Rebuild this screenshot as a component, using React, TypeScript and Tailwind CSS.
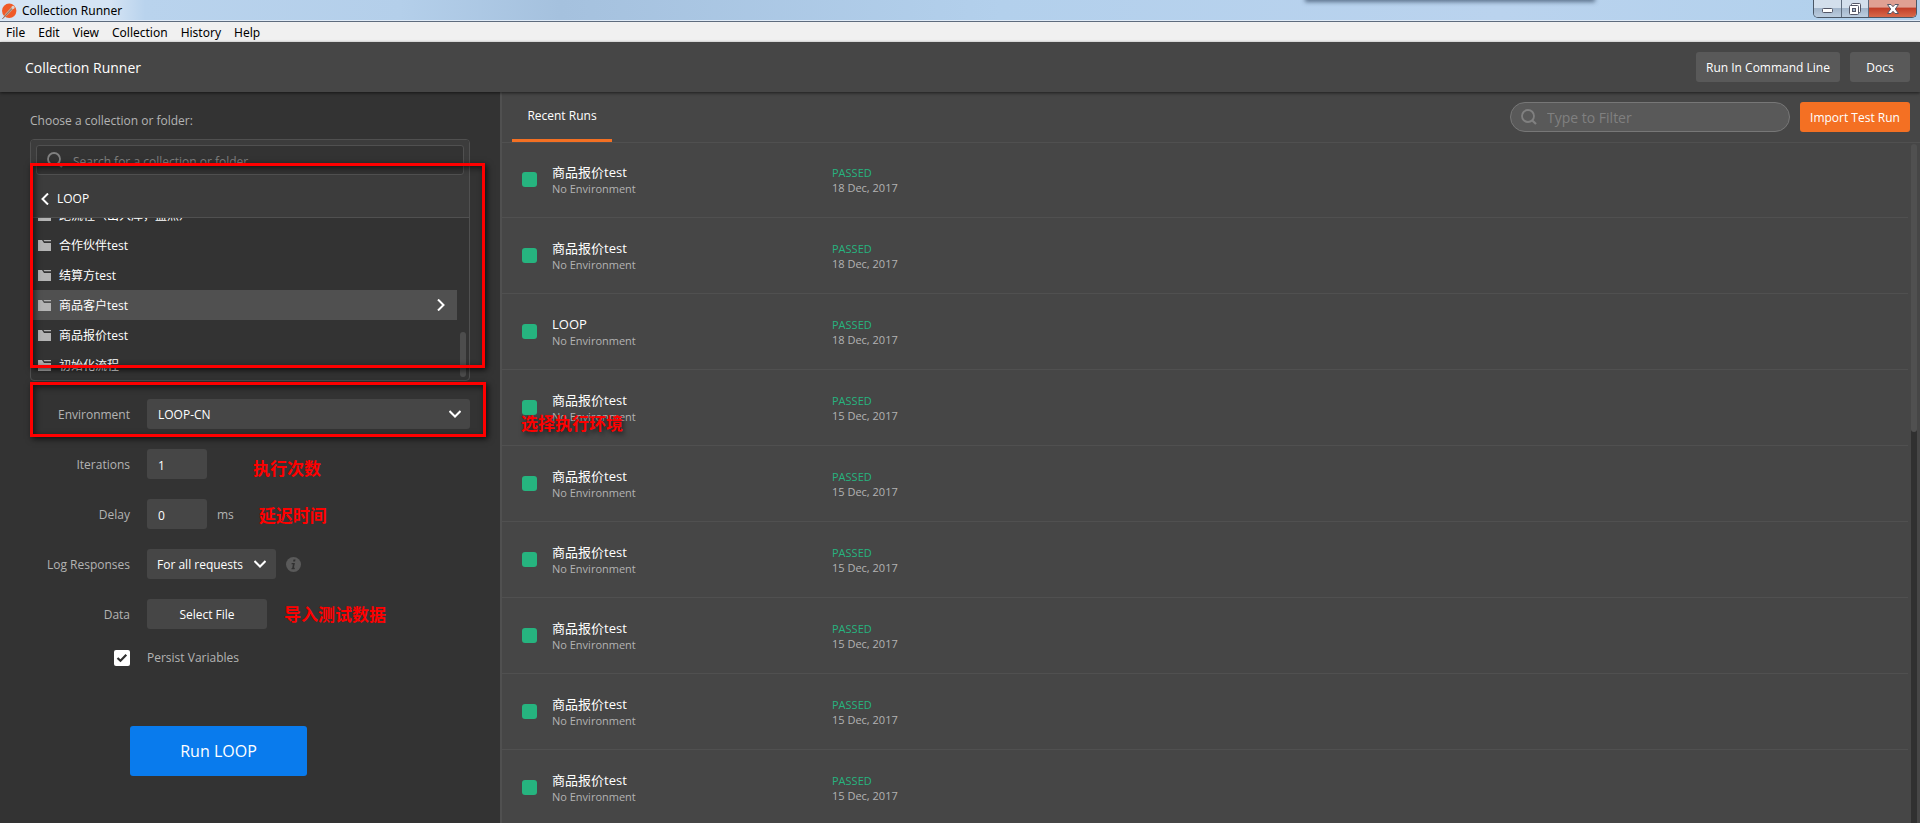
import React from "react";

const cjk = "[font-family:'Open_Sans','Noto_Sans_CJK_SC',sans-serif]";
const chrome = "[font-family:'Noto_Sans','Noto_Sans_CJK_SC',sans-serif]";

const folders = ["跑流程（出入库，盘点）", "合作伙伴test", "结算方test", "商品客户test", "商品报价test", "初始化流程"];

const runs = [
  { name: "商品报价test", date: "18 Dec, 2017" },
  { name: "商品报价test", date: "18 Dec, 2017" },
  { name: "LOOP", date: "18 Dec, 2017" },
  { name: "商品报价test", date: "15 Dec, 2017", note: "选择执行环境" },
  { name: "商品报价test", date: "15 Dec, 2017" },
  { name: "商品报价test", date: "15 Dec, 2017" },
  { name: "商品报价test", date: "15 Dec, 2017" },
  { name: "商品报价test", date: "15 Dec, 2017" },
  { name: "商品报价test", date: "15 Dec, 2017" },
];

function SearchIcon({ className }: { className: string }) {
  return (
    <svg viewBox="0 0 16 16" fill="none" stroke="currentColor" strokeWidth="1.8" className={className} aria-hidden="true">
      <circle cx="7" cy="7" r="6" />
      <path d="M11 11.2 15 15" strokeWidth="2.2" />
    </svg>
  );
}

function Chevron({ d, className }: { d: string; className: string }) {
  return (
    <svg viewBox="0 0 12 12" fill="none" stroke="currentColor" strokeWidth="2" className={className} aria-hidden="true">
      <path d={d} />
    </svg>
  );
}

function FolderIcon() {
  return (
    <svg viewBox="0 0 13 11" className="h-[11px] w-[13px] shrink-0 text-[#b4b4b4]" fill="currentColor" aria-hidden="true">
      <path d="M0 0h4l2 3h7v8H0z" />
      <path d="M5.5 0H13v1.2H6.3z" />
    </svg>
  );
}

function Note({ children, className }: { children: React.ReactNode; className: string }) {
  return (
    <span className={`whitespace-nowrap text-[17px] leading-5 font-bold text-[#ff0000] ${className}`}>{children}</span>
  );
}

function Frame({ className }: { className: string }) {
  return (
    <div
      className={`pointer-events-none absolute border-3 border-[#ff0000] shadow-[2px_2px_6px_rgba(0,0,0,0.7),inset_2px_2px_6px_rgba(0,0,0,0.6)] ${className}`}
    />
  );
}

function TitleBar() {
  return (
    <div className="relative flex h-[22px] shrink-0 items-start justify-between overflow-hidden border-b border-[#5d6b7d] bg-[linear-gradient(90deg,#d5e4f4_0,#d5e4f4_110px,#b9d3ed_145px,#b4cfea_400px,#a5c1de_560px,#b3d0ec_1000px,#bad3ee_1500px,#b0d0ec_100%)] shadow-[inset_0_-1px_0_#dfeaf6]">
      <div className="flex h-[22px] items-center gap-[5px] pl-px">
        <svg viewBox="0 0 16 16" className="size-4" aria-hidden="true">
          <circle cx="8.200" cy="7.800" r="7.200" fill="#f05a28" />
          <path d="M1 16.500 4.500 10.500 10 4.500l2.200 1.700L6.500 12z" fill="#c9a08c" />
          <path d="M.8 16.500 11.500 5" stroke="#7d6a62" strokeWidth=".8" />
          <circle cx="12" cy="4.400" r="1.600" fill="#d9d3cf" />
        </svg>
        <span className={`text-xs leading-5 text-black ${chrome}`}>Collection Runner</span>
      </div>
      <div className="absolute -top-1 left-[68%] h-1 w-[15%] shadow-[0_1px_4px_1px_rgba(50,70,95,0.7)]" />
      <div className="mr-[3px] flex h-[18px] overflow-hidden rounded-b-[5px] border border-t-0 border-[#4a5766]">
        <button aria-label="Minimize" className="flex w-7 items-center justify-center border-r border-[#5d6b7d] bg-[linear-gradient(#d3dfec_0_45%,#a3b6cb_50%,#bccddf)]">
          <svg viewBox="0 0 11 5" className="mt-1 h-[5px] w-[11px]" aria-hidden="true">
            <rect x=".5" y=".5" width="10" height="4" rx="1" fill="#fff" stroke="#535666" />
          </svg>
        </button>
        <button aria-label="Restore" className="flex w-[27px] items-center justify-center border-r border-[#5d6b7d] bg-[linear-gradient(#d3dfec_0_45%,#a3b6cb_50%,#bccddf)]">
          <svg viewBox="0 0 12 12" className="size-3" fill="#fff" stroke="#535666" aria-hidden="true">
            <rect x="2.500" y=".5" width="9" height="9" rx="1" />
            <rect x=".5" y="2.500" width="9" height="9" rx="1" />
            <rect x="3.500" y="5.500" width="3" height="3" fill="#a3b6cb" />
          </svg>
        </button>
        <button aria-label="Close" className="flex w-[47px] items-center justify-center bg-[linear-gradient(#e0a093_0_40%,#c2402a_50%,#d8694a)]">
          <svg viewBox="0 0 12 10" className="h-2.5 w-3" aria-hidden="true">
            <path d="M.5.5h3.500l2 2.200 2-2.200h3.500L8.300 5l3.200 4.500H8L6 7.300 4 9.500H.5L3.700 5z" fill="#fff" stroke="#535666" />
          </svg>
        </button>
      </div>
    </div>
  );
}

function CollectionPicker() {
  return (
    <div className="relative mt-2.5">
      <div className="flex h-[242px] flex-col overflow-hidden rounded-[4px] border border-[#505050]">
        <div className="border-b border-[#505050] bg-[#3c3c3c] px-[5px] pt-[5px]">
          <label className="flex h-[30px] items-center gap-2.5 rounded-[3px] border border-[#505050] bg-[#333333] px-2.5">
            <SearchIcon className="size-4 shrink-0 text-[#808080]" />
            <input
              aria-label="Search for a collection or folder"
              placeholder="Search for a collection or folder"
              className="w-full bg-transparent pt-1 text-xs text-white outline-none placeholder:text-[#808080]"
            />
          </label>
          <button className="flex h-[42px] items-center gap-1.5 pt-1.5 pl-[3px] text-xs text-white">
            <Chevron d="M9 0.500 3.500 6 9 11.500" className="size-3" />
            LOOP
          </button>
        </div>
        <div className="relative min-h-0 flex-1 overflow-hidden">
          <ul className="-mt-[18px] mr-3">
            {folders.map((name, i) => (
              <li key={name}>
                <button
                  className={`flex h-[30px] w-full items-center gap-2 pr-2.5 pl-[7px] text-left text-xs text-white ${i === 3 ? "bg-[#505050]" : ""}`}
                >
                  <FolderIcon />
                  <span className="flex-1 pt-0.5">{name}</span>
                  {i === 3 && <Chevron d="M3 0.500 8.500 6 3 11.500" className="size-3" />}
                </button>
              </li>
            ))}
          </ul>
          <div className="absolute right-[3px] bottom-[3px] h-[45px] w-1.5 rounded-full bg-[#4d4d4d]" />
        </div>
      </div>
      <Frame className="top-6 -right-[15px] bottom-[13px] left-0" />
    </div>
  );
}

const labelCls = "w-[100px] shrink-0 pt-0.5 text-right text-xs text-[#b3b3b3]";
const fieldCls = "h-[30px] rounded-[3px] bg-[#464646] pt-0.5 text-xs text-white outline-none";

function Settings() {
  return (
    <form className="flex flex-col" onSubmit={(e) => e.preventDefault()}>
      <div className="relative mt-px h-[55px] pt-[17px]">
        <div className="flex items-center gap-[17px]">
          <label htmlFor="env" className={labelCls}>Environment</label>
          <div className="relative flex-1">
            <select id="env" className={`${fieldCls} w-full appearance-none px-[11px]`}>
              <option>LOOP-CN</option>
            </select>
            <Chevron d="M0.500 3 6 8.500 11.500 3" className="pointer-events-none absolute top-[9px] right-[9px] size-3 text-white" />
          </div>
        </div>
        <Frame className="inset-y-0 -right-4 left-0" />
      </div>
      <div className="mt-3 flex items-center gap-[17px]">
        <label htmlFor="iter" className={labelCls}>Iterations</label>
        <input id="iter" defaultValue="1" className={`${fieldCls} w-[60px] px-[11px]`} />
        <Note className="mt-2.5 ml-[29px]">执行次数</Note>
      </div>
      <div className="mt-5 flex items-center gap-[17px]">
        <label htmlFor="delay" className={labelCls}>Delay</label>
        <div className="flex items-center gap-2.5">
          <input id="delay" defaultValue="0" className={`${fieldCls} w-[60px] px-[11px]`} />
          <span className="pt-0.5 text-xs text-[#b3b3b3]">ms</span>
        </div>
        <Note className="mt-1 ml-2">延迟时间</Note>
      </div>
      <div className="mt-5 flex items-center gap-[17px]">
        <label htmlFor="log" className={labelCls}>Log Responses</label>
        <div className="flex items-center gap-2.5">
          <div className="relative">
            <select id="log" className={`${fieldCls} w-[129px] appearance-none px-2.5`}>
              <option>For all requests</option>
            </select>
            <Chevron d="M0.500 3 6 8.500 11.500 3" className="pointer-events-none absolute top-[9px] right-2.5 size-3 text-white" />
          </div>
          <svg viewBox="0 0 15 15" className="size-[15px]" aria-hidden="true">
            <circle cx="7.500" cy="7.500" r="7.500" fill="#5a5a5a" />
            <path d="M7.500 2.500h2l-.4 2h-2zM5.700 6h3.200l-1 4.800h1l-.3 1.400H5.400l.3-1.300h.5l.7-3.600H5.500z" fill="#303030" />
          </svg>
        </div>
      </div>
      <div className="mt-5 flex items-center gap-[17px]">
        <label htmlFor="data" className={labelCls}>Data</label>
        <button id="data" type="button" className={`${fieldCls} w-[120px]`}>Select File</button>
        <Note className="mt-0.5">导入测试数据</Note>
      </div>
      <label className="mt-5 flex h-[18px] items-center gap-[17px] text-xs text-[#b3b3b3]">
        <span className="flex w-[100px] justify-end">
          <span className="relative size-4">
            <input type="checkbox" defaultChecked className="block size-4 appearance-none rounded-[2px] bg-white" />
            <svg viewBox="0 0 16 16" className="pointer-events-none absolute inset-0 size-4" aria-hidden="true">
              <path d="M3.500 8 6.500 10.800 12.300 4.800" fill="none" stroke="#303030" strokeWidth="2.200" />
            </svg>
          </span>
        </span>
        Persist Variables
      </label>
      <button className="mt-[59px] ml-[100px] h-[50px] w-[177px] rounded-[3px] bg-[#097bed] text-base text-white">Run LOOP</button>
    </form>
  );
}

function RecentRuns() {
  return (
    <main className="flex min-w-0 flex-1 flex-col border-l-2 border-[#505050] bg-[#464646]">
      <div className="flex h-[51px] shrink-0 items-stretch justify-between border-b border-[#505050] pr-2.5 pl-2.5">
        <button className="w-[100px] border-b-3 border-[#f47023] text-xs text-white">Recent Runs</button>
        <div className="flex items-center gap-2.5">
          <label className="flex h-[30px] w-[280px] items-center gap-2.5 rounded-full border border-[#777777] bg-[#595959] px-2.5">
            <SearchIcon className="size-4 shrink-0 text-[#808080]" />
            <input aria-label="Filter runs" placeholder="Type to Filter" className="w-full bg-transparent pt-0.5 text-sm text-white outline-none placeholder:text-[#808080]" />
          </label>
          <button className="h-[30px] w-[110px] rounded-[3px] bg-[#f47023] pt-0.5 text-xs text-white">Import Test Run</button>
        </div>
      </div>
      <div className="relative -mt-px min-h-0 flex-1 overflow-hidden">
        <ul className="mr-3">
          {runs.map((run, i) => (
            <li key={i} className="relative flex h-[76px] items-center border-b border-[#505050] pl-5">
              <span className="mr-[15px] size-[15px] rounded-[3px] bg-[#26b47f]" />
              <div className="w-[280px]">
                <div className="text-[13px] leading-[18px] text-white">{run.name}</div>
                <div className="text-[11px] leading-4 text-[#b3b3b3]">No Environment</div>
              </div>
              <div className="text-[11px] leading-[15px] text-[#b3b3b3]">
                <div className="font-medium text-[#26b47f]">PASSED</div>
                <div>{run.date}</div>
              </div>
              {run.note && (
                <Note className="absolute top-11 left-[19px] [text-shadow:2px_3px_5px_rgba(0,0,0,0.6)]">{run.note}</Note>
              )}
            </li>
          ))}
        </ul>
        <div className="absolute top-0.5 right-[3px] bottom-0 w-1.5 bg-[linear-gradient(#464646_0_280px,#303030_280px)]">
          <div className="h-[288px] rounded-full bg-[#505050]" />
        </div>
      </div>
    </main>
  );
}

export default function App() {
  return (
    <div className={`flex h-screen flex-col overflow-hidden bg-[#333333] ${cjk}`}>
      <TitleBar />
      <nav className={`flex h-5 shrink-0 items-center gap-[13px] bg-[#f0f0f0] px-1.5 pt-0.5 text-xs text-black ${chrome}`}>
        {["File", "Edit", "View", "Collection", "History", "Help"].map((m) => (
          <button key={m}>{m}</button>
        ))}
      </nav>
      <header className="relative z-10 flex h-[50px] shrink-0 items-center justify-between bg-[#464646] pr-2.5 pl-[25px] shadow-[0_1px_3px_rgba(0,0,0,0.6)]">
        <h1 className="pt-0.5 text-sm text-white">Collection Runner</h1>
        <div className="flex gap-2.5 text-xs text-white">
          <button className="h-[30px] w-36 rounded-[3px] bg-[#595959] pt-0.5">Run In Command Line</button>
          <button className="h-[30px] w-[60px] rounded-[3px] bg-[#595959] pt-0.5">Docs</button>
        </div>
      </header>
      <div className="flex min-h-0 flex-1">
        <aside className="w-[500px] shrink-0 pt-5 pr-[30px] pl-[30px]">
          <p className="text-xs leading-[17px] text-[#b3b3b3]">Choose a collection or folder:</p>
          <CollectionPicker />
          <Settings />
        </aside>
        <RecentRuns />
      </div>
    </div>
  );
}
